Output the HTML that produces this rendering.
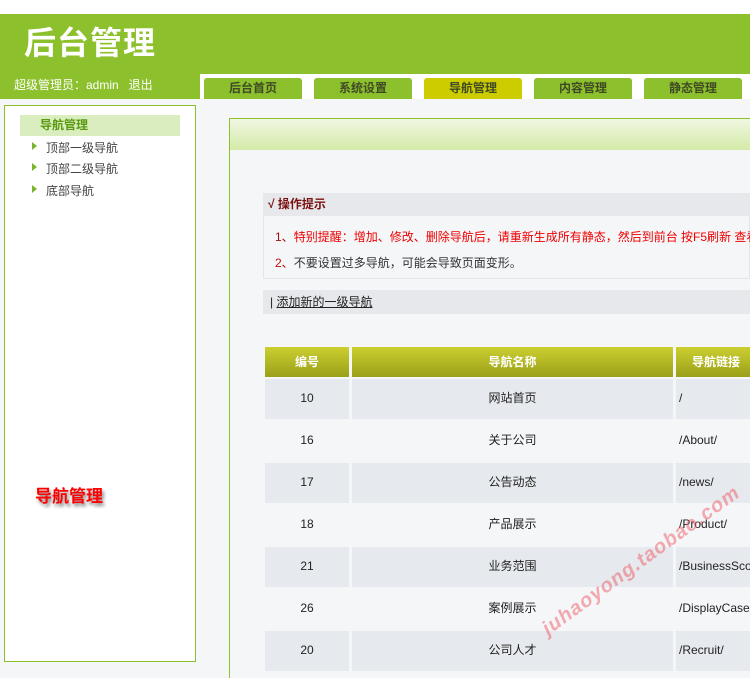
<!DOCTYPE html>
<html><head><meta charset="utf-8"><style>
*{margin:0;padding:0;box-sizing:border-box}
body{width:750px;height:667px;overflow:hidden;background:#f5f6f8;font-family:"Liberation Sans","Noto Sans CJK SC",sans-serif;font-size:12px;color:#333;position:relative}
.a{position:absolute}
.top{left:0;top:0;width:750px;height:14px;background:#fff}
.hd{left:0;top:14px;width:750px;height:85px;background:#8cc02c}
.title{left:24px;top:18px;font-size:32px;font-weight:bold;color:#fff;letter-spacing:1px}
.user{left:14px;top:76px;color:#fff;font-size:12px}
.strip{left:200px;top:74px;width:550px;height:25px;background:#fff}
.tab{top:78px;width:98px;height:21px;background:#8cc02c;color:#3f4a25;font-weight:bold;text-align:center;line-height:21px;font-size:12px;border-radius:3px 3px 0 0}
.side{left:4px;top:105px;width:192px;height:557px;border:1px solid #8cc02c;background:#fff}
.sh{left:20px;top:115px;width:160px;height:21px;background:#d9edbe;color:#5a9a10;line-height:21px;padding-left:20px;font-weight:bold}
.si{left:32px;color:#444;font-size:12px}
.si:before{content:"";position:absolute;left:0;top:3px;border-left:5px solid #7bb52a;border-top:4px solid transparent;border-bottom:4px solid transparent}
.si span{margin-left:14px}
.box{left:229px;top:118px;width:521px;height:560px;border-left:1px solid #8cc02c;border-top:1px solid #8cc02c}
.band{left:230px;top:119px;width:520px;height:31px;background:linear-gradient(#f0f7e2,#d4eaa8)}
.tt{left:263px;top:193px;width:487px;height:23px;background:#e6e8ec;color:#7a1010;font-weight:bold;line-height:23px;padding-left:5px}
.tc{left:263px;top:216px;width:487px;height:63px;border:1px solid #e3e5e9;border-top:none}
.add{left:263px;top:290px;width:487px;height:24px;background:#e6e8ec;line-height:24px;padding-left:7px;color:#222}
.th{top:347px;height:30px;background:linear-gradient(#cccf30,#9aa01a);color:#fff;font-weight:bold;text-align:center;line-height:30px}
.td{height:40px;line-height:38px;color:#222}
.g{background:#e6e9ed}
.wm{left:538px;top:622px;color:rgba(240,90,100,.5);font-weight:bold;font-style:italic;font-size:20px;transform:rotate(-36deg);transform-origin:left top;white-space:nowrap;letter-spacing:1px}
</style></head><body>
<div class="a top"></div>
<div class="a hd"></div>
<div class="a title">后台管理</div>
<div class="a user">超级管理员：admin &nbsp;&nbsp;退出</div>
<div class="a strip"></div>
<div class="a tab" style="left:204px">后台首页</div>
<div class="a tab" style="left:314px">系统设置</div>
<div class="a tab" style="left:424px;background:#cccc00">导航管理</div>
<div class="a tab" style="left:534px">内容管理</div>
<div class="a tab" style="left:644px">静态管理</div>
<div class="a side"></div>
<div class="a sh">导航管理</div>
<div class="a si" style="top:139px"><span>顶部一级导航</span></div>
<div class="a si" style="top:160px"><span>顶部二级导航</span></div>
<div class="a si" style="top:182px"><span>底部导航</span></div>
<div class="a" style="left:35px;top:482px;color:#f00;font-weight:bold;font-size:17px;text-shadow:2px 3px 3px #888">导航管理</div>
<div class="a box"></div>
<div class="a band"></div>
<div class="a tt">√ 操作提示</div>
<div class="a tc"></div>
<div class="a" style="left:275px;top:228px;color:#e00;white-space:nowrap"><span style="color:#a01010">1、</span>特别提醒：增加、修改、删除导航后，请重新生成所有静态，然后到前台 按F5刷新 查看</div>
<div class="a" style="left:275px;top:254px;white-space:nowrap"><span style="color:#c01010">2、</span>不要设置过多导航，可能会导致页面变形。</div>
<div class="a add">| <u>添加新的一级导航</u></div>
<div class="a th" style="left:265px;width:84px">编号</div>
<div class="a th" style="left:352px;width:321px">导航名称</div>
<div class="a th" style="left:676px;width:80px">导航链接</div>
<div class="a td g" style="left:265px;top:379px;width:84px;text-align:center">10</div><div class="a td g" style="left:352px;top:379px;width:321px;text-align:center">网站首页</div><div class="a td g" style="left:676px;top:379px;width:80px;padding-left:3px">/</div>
<div class="a td" style="left:265px;top:421px;width:84px;text-align:center">16</div><div class="a td" style="left:352px;top:421px;width:321px;text-align:center">关于公司</div><div class="a td" style="left:676px;top:421px;width:80px;padding-left:3px">/About/</div>
<div class="a td g" style="left:265px;top:463px;width:84px;text-align:center">17</div><div class="a td g" style="left:352px;top:463px;width:321px;text-align:center">公告动态</div><div class="a td g" style="left:676px;top:463px;width:80px;padding-left:3px">/news/</div>
<div class="a td" style="left:265px;top:505px;width:84px;text-align:center">18</div><div class="a td" style="left:352px;top:505px;width:321px;text-align:center">产品展示</div><div class="a td" style="left:676px;top:505px;width:80px;padding-left:3px">/Product/</div>
<div class="a td g" style="left:265px;top:547px;width:84px;text-align:center">21</div><div class="a td g" style="left:352px;top:547px;width:321px;text-align:center">业务范围</div><div class="a td g" style="left:676px;top:547px;width:80px;padding-left:3px;white-space:nowrap;overflow:hidden">/BusinessScope/</div>
<div class="a td" style="left:265px;top:589px;width:84px;text-align:center">26</div><div class="a td" style="left:352px;top:589px;width:321px;text-align:center">案例展示</div><div class="a td" style="left:676px;top:589px;width:80px;padding-left:3px;white-space:nowrap;overflow:hidden">/DisplayCase/</div>
<div class="a td g" style="left:265px;top:631px;width:84px;text-align:center">20</div><div class="a td g" style="left:352px;top:631px;width:321px;text-align:center">公司人才</div><div class="a td g" style="left:676px;top:631px;width:80px;padding-left:3px">/Recruit/</div>
<div class="a wm">juhaoyong.taobao.com</div>
</body></html>
